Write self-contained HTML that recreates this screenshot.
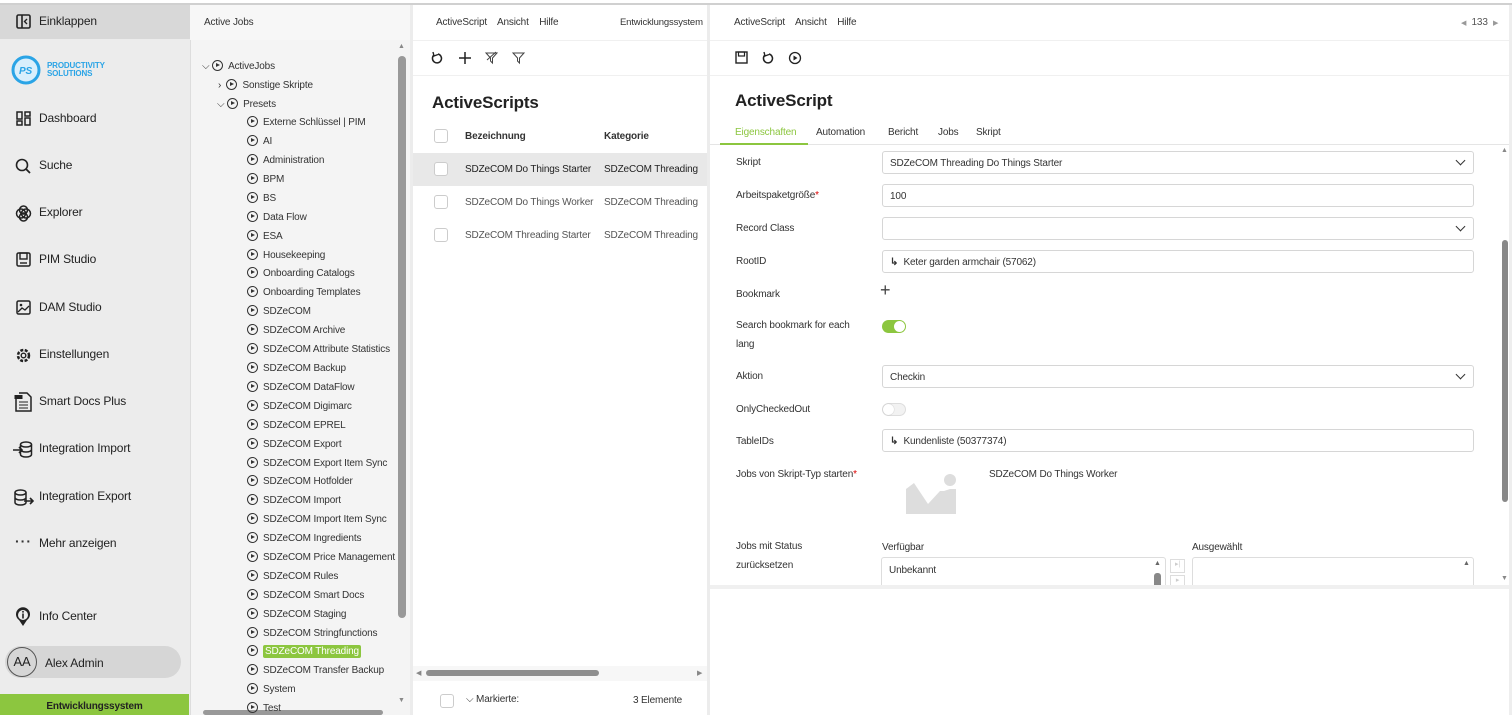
<!DOCTYPE html>
<html><head><meta charset="utf-8"><style>
*{box-sizing:border-box;margin:0;padding:0}
body{width:1512px;height:715px;overflow:hidden;position:relative;background:#fff;font-family:"Liberation Sans",sans-serif;color:#333;font-size:10px;letter-spacing:-0.15px}
.a{position:absolute;white-space:nowrap}
.ic{position:absolute}
.nav{position:absolute;left:39px;font-size:12px;color:#222}
.tr{position:absolute;font-size:10px;color:#333;line-height:14px}
.pl{display:inline-block;width:11px;height:11px;border:1.3px solid #333;border-radius:50%;position:relative;vertical-align:-2px;margin-right:5px}
.pl:after{content:"";position:absolute;left:3px;top:2px;border-left:4px solid #333;border-top:2.5px solid transparent;border-bottom:2.5px solid transparent}
.lbl{position:absolute;left:736px;font-size:10px;color:#333}
.inp{position:absolute;left:882px;width:592px;height:23px;border:1px solid #d6d6d6;border-radius:3px;font-size:10px;padding:6px 7px;color:#333}
.cb{position:absolute;left:434px;width:14px;height:14px;border:1px solid #ccc;border-radius:3px;background:#fff}
.chev{position:absolute;right:9px;top:5px;width:7px;height:7px;border-right:1.6px solid #333;border-bottom:1.6px solid #333;transform:rotate(45deg)}
</style></head><body>
<div class="a" style="left:0;top:3px;width:1512px;height:2px;background:#d0d0d0"></div>
<div class="a" style="left:0;top:5px;width:190px;height:710px;background:#ececec"></div>
<div class="a" style="left:0;top:5px;width:190px;height:34px;background:#d8d8d8"></div>
<svg class="ic" style="left:16px;top:14px" width="15" height="15" viewBox="0 0 15 15"><rect x="1" y="1" width="13" height="13" rx="1.5" fill="none" stroke="#222" stroke-width="1.6"/><line x1="6" y1="1" x2="6" y2="14" stroke="#222" stroke-width="1.6"/><path d="M11 5 L8.5 7.5 L11 10" fill="none" stroke="#222" stroke-width="1.4"/></svg>
<div class="nav" style="top:14px">Einklappen</div>
<svg class="ic" style="left:10px;top:55px" width="32" height="30"><circle cx="16" cy="15" r="13" fill="#d9effc" stroke="#2aa4e6" stroke-width="3"/><text x="9" y="19" font-size="10" font-style="italic" font-weight="bold" fill="#2aa4e6" font-family="Liberation Sans">PS</text></svg>
<div class="a" style="left:47px;top:62px;font-size:8px;font-weight:bold;color:#2aa4e6;line-height:8px">PRODUCTIVITY<br>SOLUTIONS</div>
<svg class="ic" style="left:16px;top:111px" width="15" height="15"><rect x="1" y="1" width="5" height="7" fill="none" stroke="#222" stroke-width="1.5"/><rect x="9" y="1" width="5" height="4" fill="none" stroke="#222" stroke-width="1.5"/><rect x="1" y="10" width="5" height="4" fill="none" stroke="#222" stroke-width="1.5"/><rect x="9" y="7" width="5" height="7" fill="none" stroke="#222" stroke-width="1.5"/></svg>
<div class="nav" style="top:111px">Dashboard</div>
<svg class="ic" style="left:15px;top:158px" width="17" height="17"><circle cx="7" cy="7" r="5.5" fill="none" stroke="#222" stroke-width="1.6"/><line x1="11" y1="11" x2="15" y2="15" stroke="#222" stroke-width="1.8"/></svg>
<div class="nav" style="top:158px">Suche</div>
<svg class="ic" style="left:15px;top:205px" width="17" height="17"><circle cx="6" cy="8.5" r="4.5" fill="none" stroke="#222" stroke-width="1.5"/><circle cx="11" cy="8.5" r="4.5" fill="none" stroke="#222" stroke-width="1.5"/><circle cx="8.5" cy="5" r="4" fill="none" stroke="#222" stroke-width="1.5"/><circle cx="8.5" cy="12" r="4" fill="none" stroke="#222" stroke-width="1.5"/></svg>
<div class="nav" style="top:205px">Explorer</div>
<svg class="ic" style="left:16px;top:252px" width="15" height="15"><rect x="1" y="1" width="13" height="13" rx="1.5" fill="none" stroke="#222" stroke-width="1.5"/><rect x="4" y="1" width="7" height="6" fill="none" stroke="#222" stroke-width="1.4"/><line x1="4" y1="11" x2="11" y2="11" stroke="#222" stroke-width="1.4"/></svg>
<div class="nav" style="top:252px">PIM Studio</div>
<svg class="ic" style="left:16px;top:300px" width="15" height="15"><rect x="1" y="1" width="13" height="13" rx="1.5" fill="none" stroke="#222" stroke-width="1.5"/><path d="M2 12 L6 8 L9 10 L13 6" fill="none" stroke="#222" stroke-width="1.3"/><circle cx="5" cy="5" r="1.3" fill="#222"/></svg>
<div class="nav" style="top:300px">DAM Studio</div>
<svg class="ic" style="left:15px;top:347px" width="17" height="17"><circle cx="8.5" cy="8.5" r="5.5" fill="none" stroke="#222" stroke-width="2.5" stroke-dasharray="3 1.5"/><circle cx="8.5" cy="8.5" r="2.3" fill="none" stroke="#222" stroke-width="1.4"/></svg>
<div class="nav" style="top:347px">Einstellungen</div>
<svg class="ic" style="left:14px;top:392px" width="18" height="20"><path d="M5 1 H13 L17 5 V19 H2 V4" fill="none" stroke="#222" stroke-width="1.5"/><rect x="0.5" y="3" width="8" height="4" fill="#222"/><line x1="5" y1="10" x2="14" y2="10" stroke="#222"/><line x1="5" y1="13" x2="14" y2="13" stroke="#222"/><line x1="5" y1="16" x2="14" y2="16" stroke="#222"/></svg>
<div class="nav" style="top:394px">Smart Docs Plus</div>
<svg class="ic" style="left:13px;top:441px" width="20" height="17"><ellipse cx="13" cy="3.5" rx="5.5" ry="2.5" fill="none" stroke="#222" stroke-width="1.5"/><path d="M7.5 3.5 V13.5 A5.5 2.5 0 0 0 18.5 13.5 V3.5 M7.5 8.5 A5.5 2.5 0 0 0 18.5 8.5" fill="none" stroke="#222" stroke-width="1.5"/><path d="M0 9 H9 M6 6 L9 9 L6 12" fill="none" stroke="#222" stroke-width="1.6"/></svg>
<div class="nav" style="top:441px">Integration Import</div>
<svg class="ic" style="left:14px;top:489px" width="20" height="17"><ellipse cx="6.5" cy="3.5" rx="5.5" ry="2.5" fill="none" stroke="#222" stroke-width="1.5"/><path d="M1 3.5 V13.5 A5.5 2.5 0 0 0 12 13.5 V3.5 M1 8.5 A5.5 2.5 0 0 0 12 8.5" fill="none" stroke="#222" stroke-width="1.5"/><path d="M10 12 H19 M16 9 L19 12 L16 15" fill="none" stroke="#222" stroke-width="1.6"/></svg>
<div class="nav" style="top:489px">Integration Export</div>
<div class="a" style="left:15px;top:533px;font-size:14px;font-weight:bold;letter-spacing:1px">···</div>
<div class="nav" style="top:536px">Mehr anzeigen</div>
<svg class="ic" style="left:15px;top:607px" width="16" height="20"><path d="M8 19 L4 13 A7 7 0 1 1 12 13 Z" fill="#222"/><circle cx="8" cy="8" r="5" fill="#ececec"/><rect x="7.2" y="4" width="1.6" height="1.6" fill="#222"/><rect x="7.2" y="6.5" width="1.6" height="5" fill="#222"/></svg>
<div class="nav" style="top:609px">Info Center</div>
<div class="a" style="left:5px;top:646px;width:176px;height:32px;border-radius:16px;background:#d6d6d6"></div>
<div class="a" style="left:7px;top:647px;width:30px;height:30px;border-radius:50%;border:1px solid #555;font-size:13px;text-align:center;line-height:28px;color:#222">AA</div>
<div class="nav" style="left:45px;top:656px">Alex Admin</div>
<div class="a" style="left:0;top:694px;width:189px;height:21px;background:#8cc63f;color:#222;font-size:10px;font-weight:bold;text-align:center;line-height:26px">Entwicklungssystem</div>
<div class="a" style="left:190px;top:5px;width:220px;height:710px;background:#f4f4f4;border-left:1px solid #ddd"></div>
<div class="a" style="left:190px;top:5px;width:220px;height:35px;background:#f7f7f7"></div>
<div class="a" style="left:204px;top:17px;font-size:10px">Active Jobs</div>
<div class="a" style="left:398px;top:56px;width:8px;height:562px;border-radius:4px;background:#999"></div>
<div class="a" style="left:398px;top:43px;font-size:7px;color:#888">▲</div>
<div class="a" style="left:398px;top:697px;font-size:7px;color:#888">▼</div>
<div class="a" style="left:203px;top:710px;width:180px;height:5px;border-radius:3px;background:#999"></div>
<div class="tr" style="left:202px;top:60px">⌵ <span class="pl"></span>ActiveJobs</div>
<div class="tr" style="left:218px;top:79px">›&nbsp; <span class="pl"></span>Sonstige Skripte</div>
<div class="tr" style="left:217px;top:98px">⌵ <span class="pl"></span>Presets</div>
<div class="tr" style="left:247px;top:116px"><span class="pl"></span>Externe Schlüssel | PIM</div>
<div class="tr" style="left:247px;top:135px"><span class="pl"></span>AI</div>
<div class="tr" style="left:247px;top:154px"><span class="pl"></span>Administration</div>
<div class="tr" style="left:247px;top:173px"><span class="pl"></span>BPM</div>
<div class="tr" style="left:247px;top:192px"><span class="pl"></span>BS</div>
<div class="tr" style="left:247px;top:211px"><span class="pl"></span>Data Flow</div>
<div class="tr" style="left:247px;top:230px"><span class="pl"></span>ESA</div>
<div class="tr" style="left:247px;top:249px"><span class="pl"></span>Housekeeping</div>
<div class="tr" style="left:247px;top:267px"><span class="pl"></span>Onboarding Catalogs</div>
<div class="tr" style="left:247px;top:286px"><span class="pl"></span>Onboarding Templates</div>
<div class="tr" style="left:247px;top:305px"><span class="pl"></span>SDZeCOM</div>
<div class="tr" style="left:247px;top:324px"><span class="pl"></span>SDZeCOM Archive</div>
<div class="tr" style="left:247px;top:343px"><span class="pl"></span>SDZeCOM Attribute Statistics</div>
<div class="tr" style="left:247px;top:362px"><span class="pl"></span>SDZeCOM Backup</div>
<div class="tr" style="left:247px;top:381px"><span class="pl"></span>SDZeCOM DataFlow</div>
<div class="tr" style="left:247px;top:400px"><span class="pl"></span>SDZeCOM Digimarc</div>
<div class="tr" style="left:247px;top:419px"><span class="pl"></span>SDZeCOM EPREL</div>
<div class="tr" style="left:247px;top:438px"><span class="pl"></span>SDZeCOM Export</div>
<div class="tr" style="left:247px;top:457px"><span class="pl"></span>SDZeCOM Export Item Sync</div>
<div class="tr" style="left:247px;top:475px"><span class="pl"></span>SDZeCOM Hotfolder</div>
<div class="tr" style="left:247px;top:494px"><span class="pl"></span>SDZeCOM Import</div>
<div class="tr" style="left:247px;top:513px"><span class="pl"></span>SDZeCOM Import Item Sync</div>
<div class="tr" style="left:247px;top:532px"><span class="pl"></span>SDZeCOM Ingredients</div>
<div class="tr" style="left:247px;top:551px"><span class="pl"></span>SDZeCOM Price Management</div>
<div class="tr" style="left:247px;top:570px"><span class="pl"></span>SDZeCOM Rules</div>
<div class="tr" style="left:247px;top:589px"><span class="pl"></span>SDZeCOM Smart Docs</div>
<div class="tr" style="left:247px;top:608px"><span class="pl"></span>SDZeCOM Staging</div>
<div class="tr" style="left:247px;top:627px"><span class="pl"></span>SDZeCOM Stringfunctions</div>
<div class="tr" style="left:247px;top:645px"><span class="pl"></span><span style="background:#8cc63f;color:#fff;padding:1px 2px;border-radius:2px">SDZeCOM Threading</span></div>
<div class="tr" style="left:247px;top:664px"><span class="pl"></span>SDZeCOM Transfer Backup</div>
<div class="tr" style="left:247px;top:683px"><span class="pl"></span>System</div>
<div class="tr" style="left:247px;top:702px"><span class="pl"></span>Test</div>
<div class="a" style="left:410px;top:5px;width:3px;height:710px;background:#ececec"></div>
<div class="a" style="left:707px;top:5px;width:3px;height:710px;background:#ececec"></div>
<div class="a" style="left:413px;top:40px;width:294px;height:1px;background:#f0f0f0"></div>
<div class="a" style="left:413px;top:75px;width:294px;height:1px;background:#f0f0f0"></div>
<div class="a" style="left:436px;top:17px">ActiveScript&nbsp;&nbsp;&nbsp; Ansicht&nbsp;&nbsp;&nbsp; Hilfe</div>
<div class="a" style="left:620px;top:17px;font-size:9.5px">Entwicklungssystem</div>
<svg class="ic" style="left:431px;top:51px" width="100" height="14"><path d="M3 4 A4.5 4.5 0 1 0 7 3" fill="none" stroke="#222" stroke-width="1.5"/><path d="M2 1 L3 5 L7 3.5" fill="none" stroke="#222" stroke-width="1.4"/><path d="M34 1 V13 M28 7 H40" stroke="#222" stroke-width="1.5"/><path d="M55 2 H66 L61.5 7 V12 L59.5 10 V7 Z" fill="none" stroke="#444" stroke-width="1"/><path d="M56 9 L65 1" stroke="#444"/><path d="M82 2 H93 L88.5 7 V12 L86.5 10 V7 Z" fill="none" stroke="#444" stroke-width="1"/></svg>
<div class="a" style="left:432px;top:93px;font-size:17px;font-weight:bold;color:#222">ActiveScripts</div>
<div class="cb" style="top:129px"></div>
<div class="a" style="left:465px;top:131px;font-weight:bold">Bezeichnung</div>
<div class="a" style="left:604px;top:131px;font-weight:bold">Kategorie</div>
<div class="a" style="left:413px;top:153px;width:294px;height:33px;background:#e8e8e8"></div>
<div class="cb" style="top:162px"></div><div class="a" style="left:465px;top:164px;color:#222">SDZeCOM Do Things Starter</div><div class="a" style="left:604px;top:164px;color:#222">SDZeCOM Threading</div>
<div class="cb" style="top:195px"></div><div class="a" style="left:465px;top:197px;color:#555">SDZeCOM Do Things Worker</div><div class="a" style="left:604px;top:197px;color:#555">SDZeCOM Threading</div>
<div class="cb" style="top:228px"></div><div class="a" style="left:465px;top:230px;color:#555">SDZeCOM Threading Starter</div><div class="a" style="left:604px;top:230px;color:#555">SDZeCOM Threading</div>
<div class="a" style="left:413px;top:666px;width:294px;height:15px;background:#f7f7f7"></div>
<div class="a" style="left:416px;top:669px;font-size:7px;color:#888">◀</div>
<div class="a" style="left:426px;top:670px;width:173px;height:6px;border-radius:3px;background:#8f8f8f"></div>
<div class="a" style="left:697px;top:669px;font-size:7px;color:#888">▶</div>
<div class="a" style="left:440px;top:694px;width:14px;height:14px;border:1px solid #ccc;border-radius:3px"></div>
<div class="a" style="left:466px;top:694px;font-size:10px">⌵ Markierte:</div>
<div class="a" style="left:633px;top:695px">3 Elemente</div>
<div class="a" style="left:710px;top:40px;width:802px;height:1px;background:#f0f0f0"></div>
<div class="a" style="left:710px;top:75px;width:802px;height:1px;background:#f0f0f0"></div>
<div class="a" style="left:734px;top:17px">ActiveScript&nbsp;&nbsp;&nbsp; Ansicht&nbsp;&nbsp;&nbsp; Hilfe</div>
<div class="a" style="left:1461px;top:17px;color:#555"><span style="font-size:7px;color:#999">◀</span>&nbsp; 133 &nbsp;<span style="font-size:7px;color:#999">▶</span></div>
<svg class="ic" style="left:735px;top:51px" width="70" height="14"><rect x="1" y="1" width="11" height="11" fill="none" stroke="#222" stroke-width="1.4"/><rect x="3.5" y="1" width="6" height="4" fill="none" stroke="#222" stroke-width="1.2"/><path d="M30 4 A4.5 4.5 0 1 0 34 3" fill="none" stroke="#222" stroke-width="1.5"/><path d="M29 1 L30 5 L34 3.5" fill="none" stroke="#222" stroke-width="1.4"/><circle cx="60" cy="7" r="5.5" fill="none" stroke="#222" stroke-width="1.3"/><path d="M58.5 4.5 L62.5 7 L58.5 9.5Z" fill="#222"/></svg>
<div class="a" style="left:735px;top:91px;font-size:17px;font-weight:bold;color:#222">ActiveScript</div>
<div class="a" style="left:735px;top:127px;color:#8cc63f">Eigenschaften</div>
<div class="a" style="left:816px;top:127px">Automation</div>
<div class="a" style="left:888px;top:127px">Bericht</div>
<div class="a" style="left:938px;top:127px">Jobs</div>
<div class="a" style="left:976px;top:127px">Skript</div>
<div class="a" style="left:710px;top:144px;width:802px;height:1px;background:#e5e5e5"></div>
<div class="a" style="left:720px;top:143px;width:88px;height:2px;background:#8cc63f"></div>
<div class="lbl" style="top:157px">Skript</div>
<div class="inp" style="top:151px">SDZeCOM Threading Do Things Starter<span class="chev"></span></div>
<div class="lbl" style="top:190px">Arbeitspaketgröße<span style="color:#d00">*</span></div>
<div class="inp" style="top:184px">100</div>
<div class="lbl" style="top:223px">Record Class</div>
<div class="inp" style="top:217px"><span class="chev"></span></div>
<div class="lbl" style="top:256px">RootID</div>
<div class="inp" style="top:250px"><b>↳</b>&nbsp; Keter garden armchair (57062)</div>
<div class="lbl" style="top:289px">Bookmark</div>
<div class="a" style="left:880px;top:280px;font-size:18px;color:#444;font-weight:300">+</div>
<div class="lbl" style="top:316px;line-height:19px;white-space:normal;width:130px">Search bookmark for each lang</div>
<div class="a" style="left:882px;top:320px;width:24px;height:13px;border-radius:7px;background:#8cc63f"></div>
<div class="a" style="left:894px;top:321px;width:11px;height:11px;border-radius:50%;background:#fff"></div>
<div class="lbl" style="top:371px">Aktion</div>
<div class="inp" style="top:365px">Checkin<span class="chev"></span></div>
<div class="lbl" style="top:404px">OnlyCheckedOut</div>
<div class="a" style="left:882px;top:403px;width:24px;height:13px;border-radius:7px;background:#f2f2f2;border:1px solid #ddd"></div>
<div class="a" style="left:883px;top:404px;width:11px;height:11px;border-radius:50%;background:#fff;box-shadow:0 0 1px #aaa"></div>
<div class="lbl" style="top:436px">TableIDs</div>
<div class="inp" style="top:429px"><b>↳</b>&nbsp; Kundenliste (50377374)</div>
<div class="lbl" style="top:469px">Jobs von Skript-Typ starten<span style="color:#d00">*</span></div>
<svg class="ic" style="left:906px;top:471px" width="52" height="43"><circle cx="44" cy="9" r="6" fill="#ddd"/><path d="M0 43 V18 L8 12 L22 33 L34 20 L38 20 L44 18 L50 18 V43Z" fill="#ddd"/></svg>
<div class="a" style="left:989px;top:469px">SDZeCOM Do Things Worker</div>
<div class="lbl" style="top:537px;line-height:19px">Jobs mit Status<br>zurücksetzen</div>
<div class="a" style="left:882px;top:542px">Verfügbar</div>
<div class="a" style="left:1192px;top:542px">Ausgewählt</div>
<div class="a" style="left:881px;top:557px;width:285px;height:40px;border:1px solid #ddd;border-radius:3px;padding:7px 7px;font-size:10px">Unbekannt</div>
<div class="a" style="left:1154px;top:560px;font-size:7px;color:#666">▲</div>
<div class="a" style="left:1154px;top:573px;width:7px;height:20px;border-radius:3px;background:#888"></div>
<div class="a" style="left:1170px;top:559px;width:15px;height:14px;border:1px solid #ddd;font-size:7px;color:#ccc;text-align:center">▸|</div>
<div class="a" style="left:1170px;top:575px;width:15px;height:14px;border:1px solid #ddd;font-size:7px;color:#ccc;text-align:center">▸</div>
<div class="a" style="left:1192px;top:557px;width:282px;height:40px;border:1px solid #ddd;border-radius:3px"></div>
<div class="a" style="left:1463px;top:560px;font-size:7px;color:#666">▲</div>
<div class="a" style="left:1501px;top:147px;font-size:7px;color:#888">▲</div>
<div class="a" style="left:1502px;top:240px;width:6px;height:262px;border-radius:3px;background:#888"></div>
<div class="a" style="left:1501px;top:575px;font-size:7px;color:#888">▼</div>
<div class="a" style="left:710px;top:585px;width:802px;height:130px;background:#fff;border-top:4px solid #f0f0f0"></div>
<div class="a" style="left:1509px;top:5px;width:3px;height:710px;background:#eee"></div>
</body></html>
